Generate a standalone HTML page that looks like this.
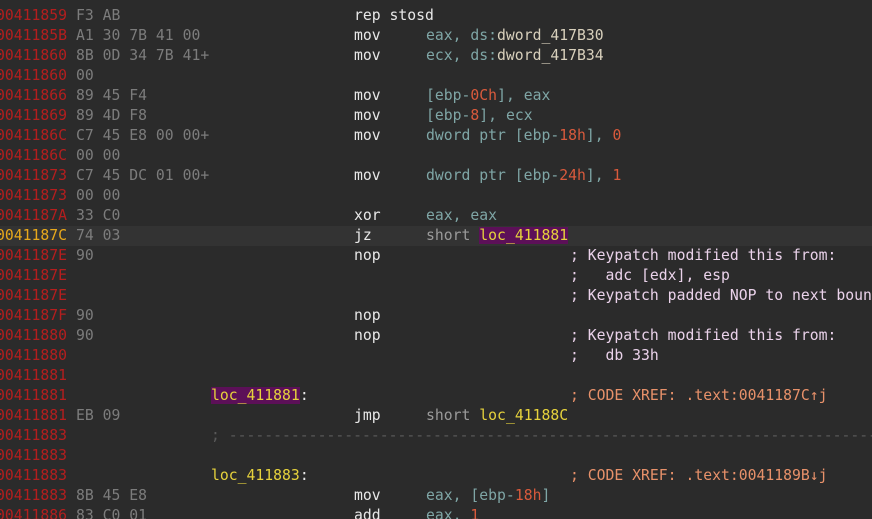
<!DOCTYPE html>
<html><head><meta charset="utf-8"><style>
html,body{margin:0;padding:0;background:#2b2b2b;width:872px;height:519px;overflow:hidden}
body{position:relative;font-family:"DejaVu Sans Mono","Liberation Mono",monospace;font-size:14.75px;}
.r{position:absolute;left:0;width:872px;height:20px;line-height:20px;white-space:pre}
.r span{position:absolute;top:0}
.a{left:-4px;color:#b41e1e}
.b{left:76px;color:#7c7c7c}
.l{left:211px;color:#e6d23c}
.m{left:354px;color:#e8e8e8}
.o{left:426px;color:#7fa6a6}
.c{left:570px;color:#ead2ea}
.x{color:#e8916a}
i{font-style:normal}
.n{color:#d95a3c}
.g{color:#9a9a9a}
.d{color:#d8d0bc}
.y{color:#e6d23c}
.hl{background:#5c1058}
.w{color:#e8e8e8}
</style></head><body>
<div class="r" style="top:6px"><span class="a">00411859</span><span class="b">F3 AB</span><span class="m">rep stosd</span></div>
<div class="r" style="top:26px"><span class="a">0041185B</span><span class="b">A1 30 7B 41 00</span><span class="m">mov</span><span class="o">eax, ds:<i class="d">dword_417B30</i></span></div>
<div class="r" style="top:46px"><span class="a">00411860</span><span class="b">8B 0D 34 7B 41+</span><span class="m">mov</span><span class="o">ecx, ds:<i class="d">dword_417B34</i></span></div>
<div class="r" style="top:66px"><span class="a">00411860</span><span class="b">00</span></div>
<div class="r" style="top:86px"><span class="a">00411866</span><span class="b">89 45 F4</span><span class="m">mov</span><span class="o">[ebp-<i class="n">0Ch</i>], eax</span></div>
<div class="r" style="top:106px"><span class="a">00411869</span><span class="b">89 4D F8</span><span class="m">mov</span><span class="o">[ebp-<i class="n">8</i>], ecx</span></div>
<div class="r" style="top:126px"><span class="a">0041186C</span><span class="b">C7 45 E8 00 00+</span><span class="m">mov</span><span class="o">dword ptr [ebp-<i class="n">18h</i>], <i class="n">0</i></span></div>
<div class="r" style="top:146px"><span class="a">0041186C</span><span class="b">00 00</span></div>
<div class="r" style="top:166px"><span class="a">00411873</span><span class="b">C7 45 DC 01 00+</span><span class="m">mov</span><span class="o">dword ptr [ebp-<i class="n">24h</i>], <i class="n">1</i></span></div>
<div class="r" style="top:186px"><span class="a">00411873</span><span class="b">00 00</span></div>
<div class="r" style="top:206px"><span class="a">0041187A</span><span class="b">33 C0</span><span class="m">xor</span><span class="o">eax, eax</span></div>
<div class="r" style="top:226px;background:#333333"><span class="a" style="color:#e8a81c">0041187C</span><span class="b">74 03</span><span class="m">jz</span><span class="o"><i class="g">short</i> <i class="y hl">loc_411881</i></span></div>
<div class="r" style="top:246px"><span class="a">0041187E</span><span class="b">90</span><span class="m">nop</span><span class="c">; Keypatch modified this from:</span></div>
<div class="r" style="top:266px"><span class="a">0041187E</span><span class="c">;   adc [edx], esp</span></div>
<div class="r" style="top:286px"><span class="a">0041187E</span><span class="c">; Keypatch padded NOP to next boundary</span></div>
<div class="r" style="top:306px"><span class="a">0041187F</span><span class="b">90</span><span class="m">nop</span></div>
<div class="r" style="top:326px"><span class="a">00411880</span><span class="b">90</span><span class="m">nop</span><span class="c">; Keypatch modified this from:</span></div>
<div class="r" style="top:346px"><span class="a">00411880</span><span class="c">;   db 33h</span></div>
<div class="r" style="top:366px"><span class="a">00411881</span></div>
<div class="r" style="top:386px"><span class="a">00411881</span><span class="l"><i class="hl">loc_411881</i><i class="w">:</i></span><span class="c x">; CODE XREF: .text:0041187C↑j</span></div>
<div class="r" style="top:406px"><span class="a">00411881</span><span class="b">EB 09</span><span class="m">jmp</span><span class="o"><i class="g">short</i> <i class="y">loc_41188C</i></span></div>
<div class="r" style="top:426px"><span class="a">00411883</span><span class="l" style="color:#5a5a5a">; ---------------------------------------------------------------------------</span></div>
<div class="r" style="top:446px"><span class="a">00411883</span></div>
<div class="r" style="top:466px"><span class="a">00411883</span><span class="l">loc_411883<i class="w">:</i></span><span class="c x">; CODE XREF: .text:0041189B↓j</span></div>
<div class="r" style="top:486px"><span class="a">00411883</span><span class="b">8B 45 E8</span><span class="m">mov</span><span class="o">eax, [ebp-<i class="n">18h</i>]</span></div>
<div class="r" style="top:506px"><span class="a">00411886</span><span class="b">83 C0 01</span><span class="m">add</span><span class="o">eax, <i class="n">1</i></span></div>
</body></html>
